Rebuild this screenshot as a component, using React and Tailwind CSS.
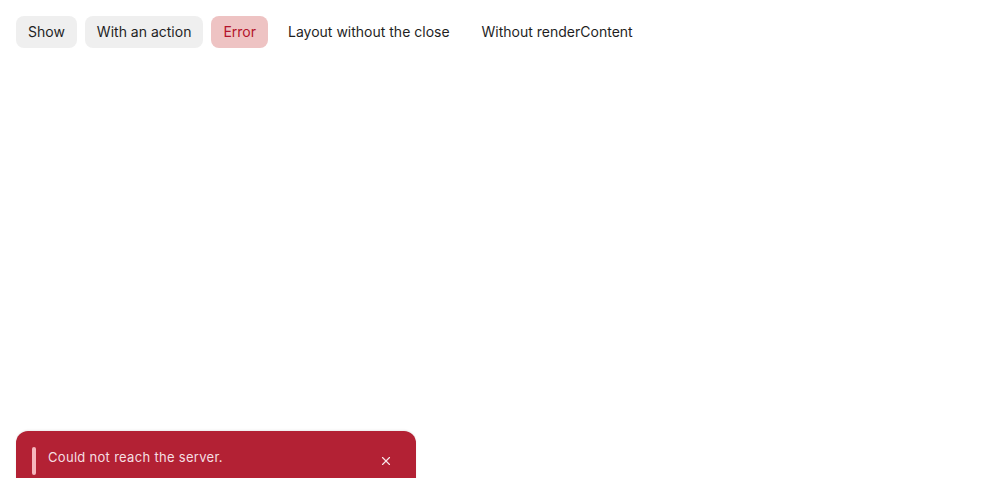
import { X } from 'lucide-react';

const buttons = [
  { label: 'Show', cls: 'bg-[#efefef] text-[#1f1f1f]' },
  { label: 'With an action', cls: 'bg-[#efefef] text-[#1f1f1f]' },
  { label: 'Error', cls: 'bg-[#eec3c3] text-[#b3132b]' },
  { label: 'Layout without the close', cls: 'bg-transparent text-[#1f1f1f]' },
  { label: 'Without renderContent', cls: 'bg-transparent text-[#1f1f1f]' },
];

const App = () => {
  return (
    <div
      className="relative h-[478px] overflow-hidden bg-white"
      style={{ fontFamily: 'Inter, "Noto Sans", sans-serif' }}
    >
      <div className="flex gap-2 p-4">
        {buttons.map((b) => (
          <button
            key={b.label}
            className={`h-8 px-3 rounded-lg text-sm leading-none ${b.cls}`}
          >
            {b.label}
          </button>
        ))}
      </div>

      {/* toast */}
      <div className="absolute left-4 top-[431px] w-[400px] h-[80px] rounded-xl bg-[#b32134] shadow-[0_-1px_2px_rgba(0,0,0,0.08)]">
        <div className="flex items-start gap-3 pl-4 pr-6 pt-4">
          <span className="w-1 h-7 rounded-full bg-[#f6b6bd]" />
          <p className="flex-1 text-[13px] tracking-[0.3px] text-[#f5dfe2] leading-5 mt-0">
            Could not reach the server.
          </p>
          <button className="mt-[7px] mr-[-1px] text-[#f7e6e8]" aria-label="Fechar">
            <X size={14} strokeWidth={2} />
          </button>
        </div>
      </div>
    </div>
  );
};

export default App;
